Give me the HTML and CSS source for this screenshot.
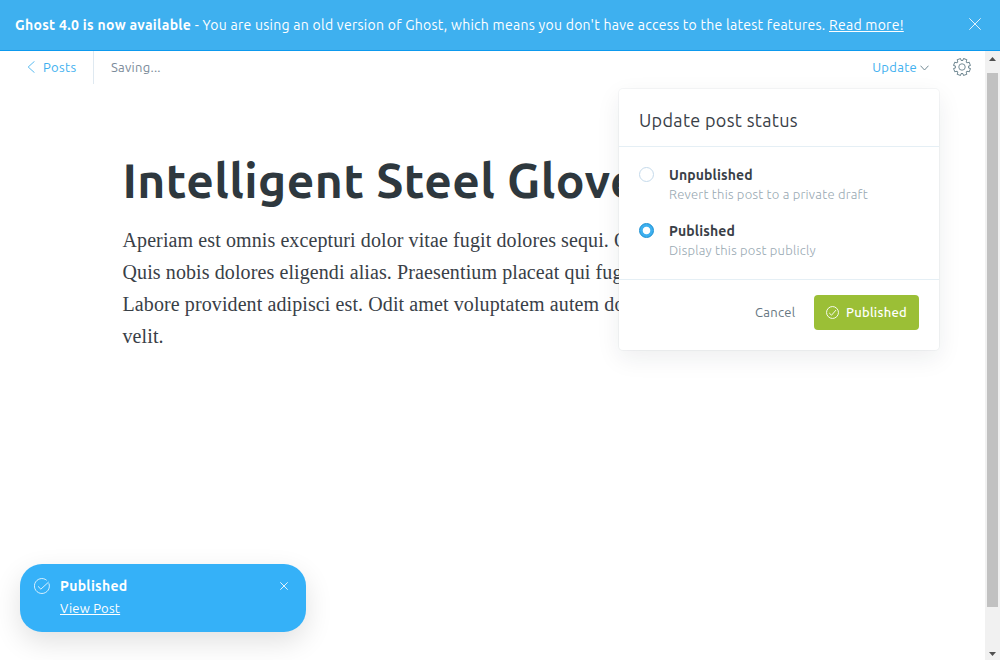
FILE: index.html
```html
<!DOCTYPE html>
<html lang="en">
<head>
<meta charset="utf-8">
<title>Editor</title>
<link rel="stylesheet" href="styles.css">
</head>
<body>
<div class="app">
  <div class="banner">
    <p class="banner-text"><strong class="banner-lead">Ghost 4.0 is now available</strong><span class="banner-copy"> - You are using an old version of Ghost, which means you don't have access to the latest features. </span><a class="banner-link">Read more!</a></p>
    <svg class="banner-close" viewBox="0 0 12 12"><path d="M.3.3l11.4 11.4M11.7.3L.3 11.7"/></svg>
  </div>
  <div class="workspace">
    <main class="editor">
      <header class="toolbar">
        <a class="back"><svg class="back-icon" viewBox="0 0 8 12"><path d="M7.500.3L1.200 6l6.300 5.700"/></svg><span>Posts</span></a>
        <span class="save-state">Saving...</span>
        <a class="update"><span>Update</span><svg class="chevron" viewBox="0 0 9 6"><path d="M.5.7l4 4.300 4-4.300"/></svg></a>
        <svg class="gear" viewBox="0 0 24 24"><path transform="rotate(22.500 12 12)" d="M9.800.7h4.400l.4 2.900 1.500.6 2.300-1.700 3.100 3.100-1.700 2.300.6 1.500 2.900.4v4.400l-2.900.4-.6 1.500 1.700 2.300-3.100 3.100-2.300-1.700-1.500.6-.4 2.900H9.800l-.4-2.900-1.500-.6-2.300 1.700-3.100-3.100 1.700-2.300-.6-1.500-2.900-.4V9.800l2.900-.4.6-1.500-1.700-2.300 3.100-3.100 2.300 1.700 1.500-.6z"/><circle cx="12" cy="12" r="4.300"/></svg>
      </header>
      <article class="post">
        <h1 class="post-title">Intelligent Steel Gloves</h1>
        <p class="post-body">Aperiam est omnis excepturi dolor vitae fugit dolores sequi. Odit<br>Quis nobis dolores eligendi alias. Praesentium placeat qui fugit<br>Labore provident adipisci est. Odit amet voluptatem autem dolor<br>velit.</p>
      </article>
    </main>
    <div class="scrollbar">
      <svg class="arrow" viewBox="0 0 7 4"><path d="M3.500 0L7 4H0z"/></svg>
      <div class="thumb"></div>
      <svg class="arrow" viewBox="0 0 7 4"><path d="M0 0h7L3.500 4z"/></svg>
    </div>
  </div>
  <section class="menu">
    <h2 class="menu-title">Update post status</h2>
    <div class="options">
      <div class="option"><span class="radio"></span><div><div class="option-name">Unpublished</div><div class="option-hint">Revert this post to a private draft</div></div></div>
      <div class="option"><span class="radio checked"></span><div><div class="option-name">Published</div><div class="option-hint">Display this post publicly</div></div></div>
    </div>
    <footer class="menu-footer">
      <span class="cancel">Cancel</span>
      <span class="submit"><svg class="submit-icon" viewBox="0 0 24 24"><circle cx="12" cy="12" r="11"/><path d="M6 13l4.200 4L18.500 7.500"/></svg><span class="submit-label">Published</span></span>
    </footer>
  </section>
  <aside class="toast">
    <svg class="toast-icon" viewBox="0 0 24 24"><path d="M22.300 8A11.200 11.200 0 1 1 19 3.400"/><path d="M6 12.500l4.300 4.200L22 6"/></svg>
    <div class="toast-content"><strong class="toast-title">Published</strong><a class="toast-link">View Post</a></div>
    <svg class="toast-close" viewBox="0 0 8 8"><path d="M.3.3l7.400 7.400M7.700.3L.3 7.700"/></svg>
  </aside>
</div>
</body>
</html>
```
FILE: styles.css
```css
* { box-sizing: border-box; margin: 0; padding: 0; }
body { font: 13px/20px Ubuntu, "Noto Sans", sans-serif; letter-spacing: .23px; background: #fff; color: #394047; }
svg { fill: none; stroke: currentColor; stroke-width: 1; flex: none; display: block; }
.app { position: relative; width: 1000px; height: 660px; overflow: hidden; display: flex; flex-direction: column; }
.banner { height: 51px; flex: none; background: #3eb0ef; border-bottom: 1px solid #0d9aee; color: #fff; display: flex; align-items: center; justify-content: space-between; padding: 0 19px 0 15px; white-space: nowrap; }
.banner-text { font-size: 14px; white-space: pre; }
.banner-lead { font-weight: 700; letter-spacing: .3px; }
.banner-copy { letter-spacing: .27px; }
.banner-link { letter-spacing: .26px; text-decoration: underline; text-underline-offset: 1px; }
.banner-close { width: 12px; height: 12px; margin-bottom: 2px; stroke-width: .85; }
.workspace { flex: 1; display: flex; min-height: 0; }
.editor { flex: 1; min-width: 0; overflow: hidden; }
.toolbar { height: 33px; display: flex; align-items: center; padding: 0 14px 2px 27px; color: #3eb0ef; white-space: nowrap; }
.back { display: flex; align-items: center; gap: 8px; height: 33px; width: 67px; margin-bottom: -2px; padding-bottom: 2px; border-right: 1px solid #dfe9f1; letter-spacing: .4px; }
.back-icon { width: 8px; height: 12px; stroke-width: .85; }
.save-state { margin-left: 17px; color: #7c8b9a; letter-spacing: .26px; }
.update { display: flex; align-items: center; gap: 3px; margin-left: auto; letter-spacing: .3px; }
.chevron { width: 9px; height: 6px; margin-top: 2px; color: #738a94; }
.gear { width: 18px; height: 18px; margin: 1px 0 0 24px; color: #738a94; stroke-width: 1.300; }
.post { padding: 65px 0 0 122.500px; white-space: nowrap; }
.post-title { font-size: 48px; line-height: 62px; font-weight: 700; color: #2e383e; letter-spacing: .42px; }
.post-body { margin-top: 13px; font: 20px/32px "Liberation Serif", serif; letter-spacing: .1px; color: #394047; }
.scrollbar { width: 15px; background: #f1f1f1; display: flex; flex-direction: column; align-items: center; padding: 6px 0 4px; color: #505050; }
.arrow { width: 7px; height: 4px; fill: currentColor; stroke: none; }
.thumb { width: 11px; height: 534px; margin: 12px 0 auto; background: #c1c1c1; }
.menu { position: absolute; left: 619px; top: 89px; width: 320px; height: 261px; background: #fff; border-radius: 4px; box-shadow: 0 0 0 1px rgba(99,114,130,.06), 0 8px 24px rgba(27,39,51,.08); white-space: nowrap; }
.menu-title { height: 58px; padding: 18px 20px 0; border-bottom: 1px solid #e5eff5; font-size: 18px; line-height: 26px; font-weight: 400; letter-spacing: .33px; }
.options { height: 133px; padding: 17px 20px 0; display: flex; flex-direction: column; gap: 16px; border-bottom: 1px solid #e5eff5; }
.option { display: flex; gap: 15px; height: 40px; }
.radio { width: 15px; height: 15px; margin-top: 3px; border: 1px solid #c5daeb; border-radius: 50%; }
.checked { border-color: #168ed2; background: radial-gradient(circle, #fff 3.400px, #3eb0ef 4.200px); }
.option-name { font-size: 14px; font-weight: 600; line-height: 21px; padding-top: 1px; letter-spacing: .13px; }
.option-hint { font-size: 13px; line-height: 19px; margin-top: -1px; color: #98a8b2; font-weight: 300; }
.menu-footer { display: flex; align-items: center; justify-content: flex-end; padding: 15px 20px 0; gap: 18.500px; }
.cancel { color: #667681; padding-bottom: 2px; letter-spacing: .3px; }
.submit { width: 105px; height: 35px; border-radius: 4px; background: #9bbf36; color: #fff; font-weight: 500; display: flex; align-items: center; gap: 7px; padding-left: 12px; }
.submit-label { padding-bottom: 2px; letter-spacing: .27px; }
.submit-icon { width: 13px; height: 13px; stroke-width: 1.700; }
.toast { position: absolute; left: 20px; top: 564px; width: 286px; height: 68px; border-radius: 22px; background: #35b1f8; box-shadow: 0 10px 28px rgba(0,0,0,.12); color: #fff; display: flex; align-items: flex-start; padding: 12px 18px 0 14px; }
.toast-icon { width: 16px; height: 16px; margin-top: 2px; stroke-width: 1.200; }
.toast-content { margin-left: 10px; flex: 1; display: flex; flex-direction: column; align-items: flex-start; }
.toast-title { font-size: 14px; line-height: 20px; font-weight: 700; letter-spacing: .3px; }
.toast-link { line-height: 24px; text-decoration: underline; text-underline-offset: 1px; }
.toast-close { width: 8px; height: 8px; margin-top: 6px; stroke-width: .85; }
```
